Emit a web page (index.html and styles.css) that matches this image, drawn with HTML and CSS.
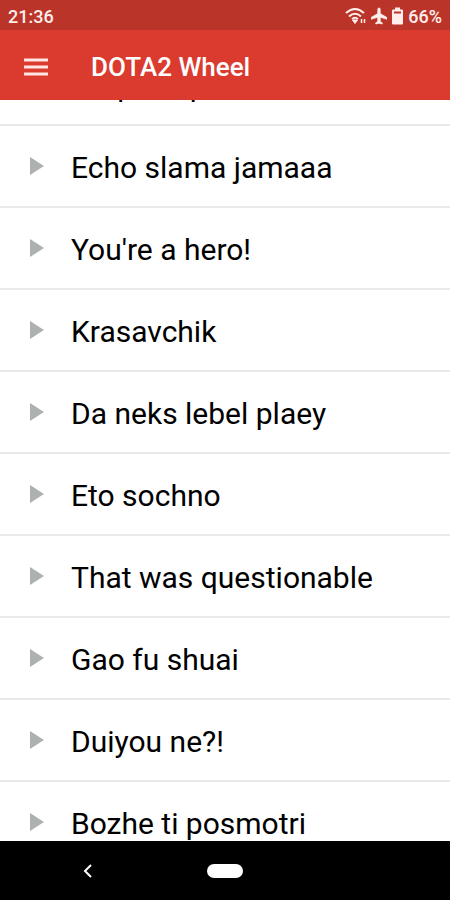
FILE: index.html
```html
<!DOCTYPE html>
<html lang="en">
<head>
    <meta charset="UTF-8">
    <meta name="viewport" content="width=device-width, initial-scale=1.0">
    <title>DOTA2 Wheel</title>
    <link rel="stylesheet" href="styles.css">
</head>
<body>

    <div class="status-bar">
        <span>21:36</span>
        <div class="status-icons">
            <svg width="21" height="18" viewBox="0 0 21 18" fill="none" stroke="currentColor" stroke-width="2">
                <path d="M1 6 Q10 -2 19 6"/>
                <path d="M4 9.500 Q10 4 16 9.500"/>
                <path d="M7 12 Q10 9.500 13 12"/>
                <path d="M7.500 13 L10 16.500 L12.500 13 Z" fill="currentColor" stroke-width="1"/>
                <path d="M16.500 12 V16 M19.500 12 V16" stroke-width="1.500"/>
            </svg>
            <svg width="16" height="18" viewBox="2 1 20 22" fill="currentColor" stroke="currentColor" stroke-width="1">
                <path d="M22 16v-2l-8.500-5V3.500a1.500 1.500 0 0 0-3 0V9L2 14v2l8.500-2.500V19L8 20.500V22l4-1 4 1v-1.500L13.500 19v-5.500z"/>
            </svg>
            <svg width="11" height="18" viewBox="0 0 11 18" fill="currentColor">
                <path fill-rule="evenodd" d="M3 0.500h5v2h2q1 0 1 1v13q0 1-1 1H1q-1 0-1-1v-13q0-1 1-1h2zM2 4.500v2h7v-2z"/>
            </svg>
            <span>66%</span>
        </div>
    </div>

    <header class="app-bar">
        <button type="button" class="menu-btn" aria-label="Menu">
            <svg width="24" height="18" viewBox="0 0 24 18" fill="currentColor">
                <path d="M0 0.500h24v3H0zM0 7.500h24v3H0zM0 14.500h24v3H0z"/>
            </svg>
        </button>
        <h1>DOTA2 Wheel</h1>
    </header>

    <main class="content">
        <ul class="sound-list">
            <li><button type="button" class="sound">Ni qi bu qi?</button></li>
            <li><button type="button" class="sound">Echo slama jamaaa</button></li>
            <li><button type="button" class="sound">You're a hero!</button></li>
            <li><button type="button" class="sound">Krasavchik</button></li>
            <li><button type="button" class="sound">Da neks lebel plaey</button></li>
            <li><button type="button" class="sound">Eto sochno</button></li>
            <li><button type="button" class="sound">That was questionable</button></li>
            <li><button type="button" class="sound">Gao fu shuai</button></li>
            <li><button type="button" class="sound">Duiyou ne?!</button></li>
            <li><button type="button" class="sound">Bozhe ti posmotri</button></li>
        </ul>
    </main>

    <nav class="nav-bar">
        <button type="button" class="back-btn" aria-label="Back">
            <svg width="10" height="14" viewBox="0 0 10 14" fill="none" stroke="currentColor" stroke-width="2">
                <path d="M8 1 L2 7 L8 13"/>
            </svg>
        </button>
        <button type="button" class="home-btn" aria-label="Home"></button>
    </nav>

</body>
</html>
```
FILE: styles.css
```css
* {
    box-sizing: border-box;
}

body {
    margin: 0;
    height: 100vh;
    display: flex;
    flex-direction: column;
    overflow: hidden;
    background: #fff;
    font-family: Roboto, sans-serif;
}

button {
    border: none;
    padding: 0;
    background: none;
    color: inherit;
    font: inherit;
    cursor: pointer;
}

svg {
    display: block;
}

/* Status bar */
.status-bar {
    display: flex;
    justify-content: space-between;
    align-items: center;
    padding: 2px 8px 0;
    height: 30px;
    background: #bb3429;
    color: #ffeeec;
    font-size: 18px;
    font-weight: 500;
}

.status-icons {
    display: flex;
    align-items: center;
    gap: 5px;
}

/* App bar */
.app-bar {
    display: flex;
    align-items: center;
    gap: 43px;
    height: 70px;
    padding: 3px 24px 0;
    background: #db3a2f;
    color: #fff;
}

.menu-btn {
    color: #ffe6e3;
}

.app-bar h1 {
    margin: 0;
    font-size: 26px;
    font-weight: 500;
}

/* Sound list */
.content {
    flex: 1;
    min-height: 0;
    overflow: hidden;
}

/* scrolled part of the way down */
.sound-list {
    list-style: none;
    margin: -56px 0 0;
    padding: 0;
}

.sound-list li {
    border-bottom: 2px solid #e9e9e9;
}

.sound {
    display: flex;
    align-items: center;
    gap: 27px;
    width: 100%;
    height: 80px;
    padding: 3px 30px 0;
    color: #000;
    font-size: 30px;
    text-align: left;
}

.sound::before {
    content: "";
    margin-bottom: 3px;
    border-left: 14px solid #adb1b0;
    border-top: 9px solid transparent;
    border-bottom: 9px solid transparent;
}

/* System navigation */
.nav-bar {
    display: grid;
    grid-template-columns: 1fr 36px 1fr;
    align-items: center;
    height: 59px;
    background: #000;
    color: #fff;
}

.back-btn {
    justify-self: center;
    margin-right: 32px;
}

.home-btn {
    height: 14px;
    border-radius: 7px;
    background: #fff;
}
```
